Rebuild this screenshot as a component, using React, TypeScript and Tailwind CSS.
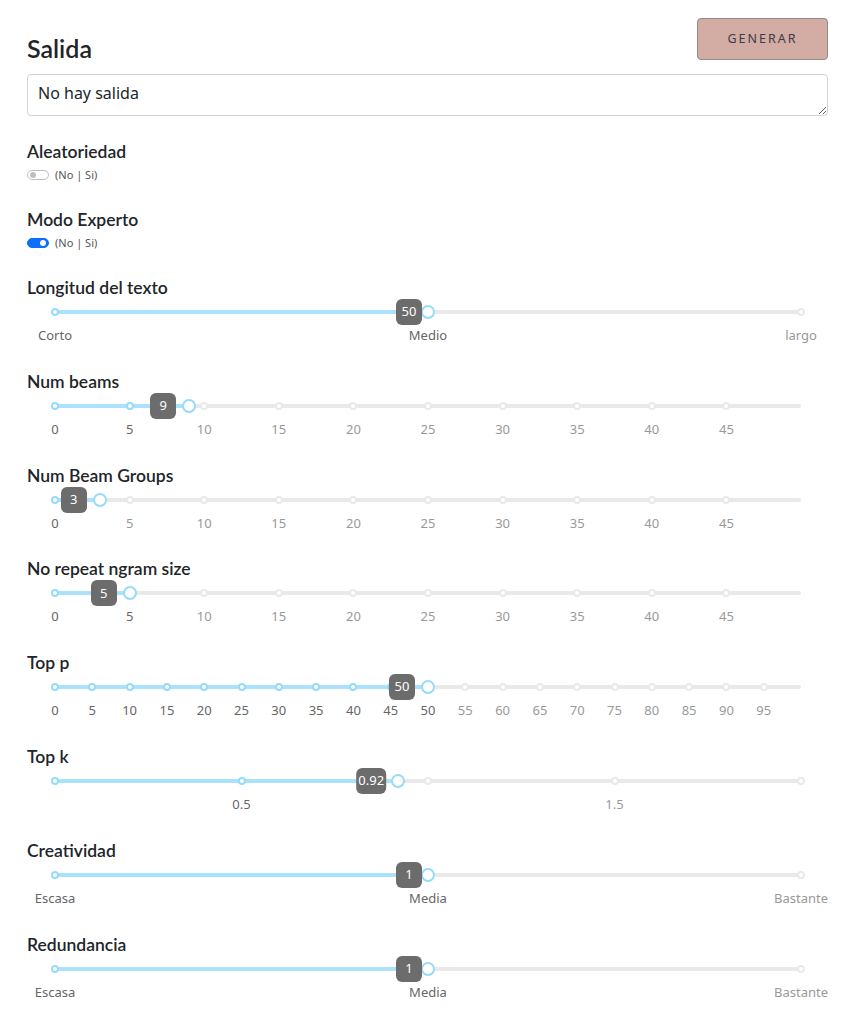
import { useState } from "react";

type Mark = { value: number; label?: string };

interface SliderProps {
  min: number;
  max: number;
  value: number;
  marks: Mark[];
  /** distancia del borde derecho del tooltip al centro del handle */
  tipGap?: number;
}

function Slider({ min, max, value, marks, tipGap = 13 }: SliderProps) {
  const pct = (v: number) => ((v - min) / (max - min)) * 100;
  const pos = pct(value);

  return (
    <div className="pl-[28px] pr-[27px] pt-[10px]">
      <div className="relative h-[4px]">
        <div className="absolute inset-0 rounded-full bg-[#e9e9e9]" />
        <div
          className="absolute left-0 top-0 h-[4px] rounded-full bg-[#abe2fb]"
          style={{ width: `${pos}%` }}
        />
        {marks.map((m) => (
          <span
            key={m.value}
            className={`absolute top-1/2 h-[8px] w-[8px] -translate-x-1/2 -translate-y-1/2 rounded-full border-2 bg-white ${
              m.value <= value ? "border-[#96dbfa]" : "border-[#e9e9e9]"
            }`}
            style={{ left: `${pct(m.value)}%` }}
          />
        ))}
        <span
          className="absolute top-1/2 h-[14px] w-[14px] -translate-x-1/2 -translate-y-1/2 rounded-full border-2 border-[#96dbfa] bg-white"
          style={{ left: `${pos}%` }}
        />
        <span
          className="absolute top-1/2 flex h-[26px] min-w-[26px] -translate-x-full -translate-y-1/2 items-center justify-center rounded-[6px] bg-[#6c6c6c] px-[2px] text-[13px] text-white"
          style={{ left: `calc(${pos}% - ${tipGap}px)` }}
        >
          {value}
        </span>
      </div>
      <div className="relative mt-[12px] h-[18px]">
        {marks
          .filter((m) => m.label)
          .map((m) => (
            <span
              key={m.value}
              className={`absolute top-0 -translate-x-1/2 whitespace-nowrap text-[13px] leading-[18px] ${
                m.value <= value ? "text-[#666]" : "text-[#999]"
              }`}
              style={{ left: `${pct(m.value)}%` }}
            >
              {m.label}
            </span>
          ))}
      </div>
    </div>
  );
}

function Switch({ on }: { on: boolean }) {
  return (
    <div className="flex h-[16px] items-center gap-[6px]">
      <span
        className={`flex h-[10px] w-[22px] items-center rounded-full border px-[2px] ${
          on ? "justify-end border-[#0d6efd] bg-[#0d6efd]" : "justify-start border-[#bfbfbf] bg-white"
        }`}
      >
        <span className={`h-[6px] w-[6px] rounded-full ${on ? "bg-white" : "bg-[#bfbfbf]"}`} />
      </span>
      <span className="text-[11px] text-[#555]">(No | Si)</span>
    </div>
  );
}

const every5 = (n: number) => Array.from({ length: n }, (_, i) => ({ value: i * 5, label: String(i * 5) }));

const tri = (a: string, b: string, c: string): Mark[] => [
  { value: 0, label: a },
  { value: 50, label: b },
  { value: 100, label: c },
];

const labelCls = "font-['Lato',sans-serif] text-[17.5px] font-semibold leading-[24px] text-[#212529]";

function Field({ label, children }: { label: string; children: React.ReactNode }) {
  return (
    <div className="mb-[25.8px]">
      <div className={labelCls}>{label}</div>
      {children}
    </div>
  );
}

export default function App() {
  const [salida] = useState("No hay salida");

  return (
    <div className="min-h-screen bg-white px-[27px] pt-[18px] font-['Noto_Sans',sans-serif] text-[#212529]">
      <div className="w-[801px]">
        <div className="flex items-end justify-between">
          <h2 className="mb-[-3px] font-['Lato',sans-serif] text-[25px] font-semibold leading-[30px]">Salida</h2>
          <button className="h-[42px] w-[131px] rounded-[4px] border border-[#8c8c8c] bg-[#d3aca4] text-[12.5px] tracking-[2px] text-[#3b3b4b]">
            GENERAR
          </button>
        </div>
        <textarea
          readOnly
          value={salida}
          className="mt-[14px] block h-[42px] w-full rounded-[4px] border border-[#ced4da] px-[10px] py-[6px] text-[16px] leading-[24px] text-[#212529] outline-none"
        />

        <div className={`mt-[24px] ${labelCls}`}>Aleatoriedad</div>
        <div className="mt-[3px]">
          <Switch on={false} />
        </div>
        <div className={`mt-[25px] ${labelCls}`}>Modo Experto</div>
        <div className="mt-[3px] mb-[25px]">
          <Switch on />
        </div>

        <Field label="Longitud del texto">
          <Slider min={0} max={100} value={50} marks={tri("Corto", "Medio", "largo")} tipGap={6} />
        </Field>
        <Field label="Num beams">
          <Slider min={0} max={50} value={9} marks={every5(10)} />
        </Field>
        <Field label="Num Beam Groups">
          <Slider min={0} max={50} value={3} marks={every5(10)} />
        </Field>
        <Field label="No repeat ngram size">
          <Slider min={0} max={50} value={5} marks={every5(10)} />
        </Field>
        <Field label="Top p">
          <Slider min={0} max={100} value={50} marks={every5(20)} />
        </Field>
        <Field label="Top k">
          <Slider
            min={0}
            max={2}
            value={0.92}
            marks={[{ value: 0 }, { value: 0.5, label: "0.5" }, { value: 1 }, { value: 1.5, label: "1.5" }, { value: 2 }]}
            tipGap={12}
          />
        </Field>
        <Field label="Creatividad">
          <Slider min={0} max={2} value={1} marks={[{ value: 0, label: "Escasa" }, { value: 1, label: "Media" }, { value: 2, label: "Bastante" }]} tipGap={6} />
        </Field>
        <Field label="Redundancia">
          <Slider min={0} max={2} value={1} marks={[{ value: 0, label: "Escasa" }, { value: 1, label: "Media" }, { value: 2, label: "Bastante" }]} tipGap={6} />
        </Field>
      </div>
    </div>
  );
}
